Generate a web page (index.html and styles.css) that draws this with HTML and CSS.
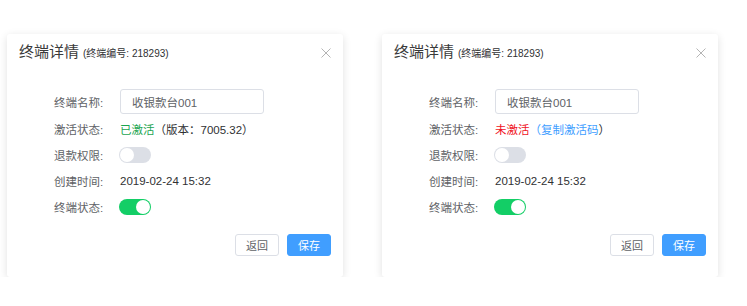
FILE: index.html
```html
<!DOCTYPE html>
<html lang="zh">
<head>
<meta charset="utf-8">
<link rel="stylesheet" href="styles.css">
</head>
<body>
<div class="page">
  <div class="card">
    <div class="header">
      <div class="title">终端详情<span class="sub">(终端编号: 218293)</span></div>
      <svg class="close" width="10" height="10" viewBox="0 0 10 10"><path d="M0.5 0.5L9.5 9.5M9.5 0.5L0.5 9.5" stroke="#b4b4b4" stroke-width="1"/></svg>
    </div>
    <div class="form">
      <div class="row first"><span class="label">终端名称:</span><div class="input">收银款台001</div></div>
      <div class="row"><span class="label">激活状态:</span><span class="value"><span class="ok">已激活</span>（版本：7005.32）</span></div>
      <div class="row"><span class="label">退款权限:</span><span class="switch"><span class="knob"></span></span></div>
      <div class="row"><span class="label">创建时间:</span><span class="value">2019-02-24 15:32</span></div>
      <div class="row"><span class="label">终端状态:</span><span class="switch on"><span class="knob"></span></span></div>
    </div>
    <div class="footer">
      <button class="btn">返回</button>
      <button class="btn primary">保存</button>
    </div>
  </div>
  <div class="card">
    <div class="header">
      <div class="title">终端详情<span class="sub">(终端编号: 218293)</span></div>
      <svg class="close" width="10" height="10" viewBox="0 0 10 10"><path d="M0.5 0.5L9.5 9.5M9.5 0.5L0.5 9.5" stroke="#b4b4b4" stroke-width="1"/></svg>
    </div>
    <div class="form">
      <div class="row first"><span class="label">终端名称:</span><div class="input">收银款台001</div></div>
      <div class="row"><span class="label">激活状态:</span><span class="value"><span class="bad">未激活</span><span class="link">（复制激活码</span>）</span></div>
      <div class="row"><span class="label">退款权限:</span><span class="switch"><span class="knob"></span></span></div>
      <div class="row"><span class="label">创建时间:</span><span class="value">2019-02-24 15:32</span></div>
      <div class="row"><span class="label">终端状态:</span><span class="switch on"><span class="knob"></span></span></div>
    </div>
    <div class="footer">
      <button class="btn">返回</button>
      <button class="btn primary">保存</button>
    </div>
  </div>
</div>
</body>
</html>
```

FILE: styles.css
```css
* { box-sizing: border-box; }
html, body { margin: 0; padding: 0; background: #fff; }
body {
  font-family: "Liberation Sans", "Noto Sans CJK SC", sans-serif;
  font-size: 11.5px;
  color: #303133;
}
.page {
  display: flex;
  gap: 39px;
  padding: 34px 0 0 7px;
}
.card {
  width: 336px;
  height: 243px;
  background: #fff;
  border-radius: 3px;
  box-shadow: 0 2px 8px rgba(0,0,0,0.12);
  display: flex;
  flex-direction: column;
  padding: 0 12px;
}
.header {
  display: flex;
  justify-content: space-between;
  align-items: center;
  height: 20px;
  margin-top: 9px;
}
.title {
  font-size: 15px;
  line-height: 20px;
  color: #3a3a3a;
  display: flex;
  align-items: baseline;
}
.sub {
  font-size: 10px;
  margin-left: 4px;
  color: #303133;
}
.close { display: block; }
.form {
  margin-top: 26px;
  padding-left: 35px;
  display: flex;
  flex-direction: column;
}
.row {
  display: flex;
  align-items: center;
  height: 26px;
}
.row.first { height: 25px; margin-bottom: 2px; }
.label {
  width: 66px;
  color: #606266;
}
.input {
  width: 144px;
  height: 25px;
  border: 1px solid #dcdfe6;
  border-radius: 3px;
  padding-left: 11px;
  display: flex;
  align-items: center;
  color: #606266;
}
.value { color: #303133; }
.ok { color: #1ba551; }
.bad { color: #f0131e; }
.link { color: #409eff; }
.switch {
  width: 32px;
  height: 16px;
  border-radius: 8px;
  background: #dcdfe6;
  margin-left: -1px;
  display: flex;
  align-items: center;
  padding: 1px;
}
.switch .knob {
  width: 14px;
  height: 14px;
  border-radius: 50%;
  background: #fff;
}
.switch.on {
  background: #13ce66;
  justify-content: flex-end;
}
.footer {
  margin-top: 14px;
  display: flex;
  justify-content: flex-end;
  gap: 8px;
}
.btn {
  width: 44px;
  height: 22px;
  padding: 0;
  border: 1px solid #dcdfe6;
  border-radius: 3px;
  background: #fff;
  color: #606266;
  font-family: inherit;
  font-size: 11px;
}
.btn.primary {
  background: #409eff;
  border-color: #409eff;
  color: #fff;
}
```
